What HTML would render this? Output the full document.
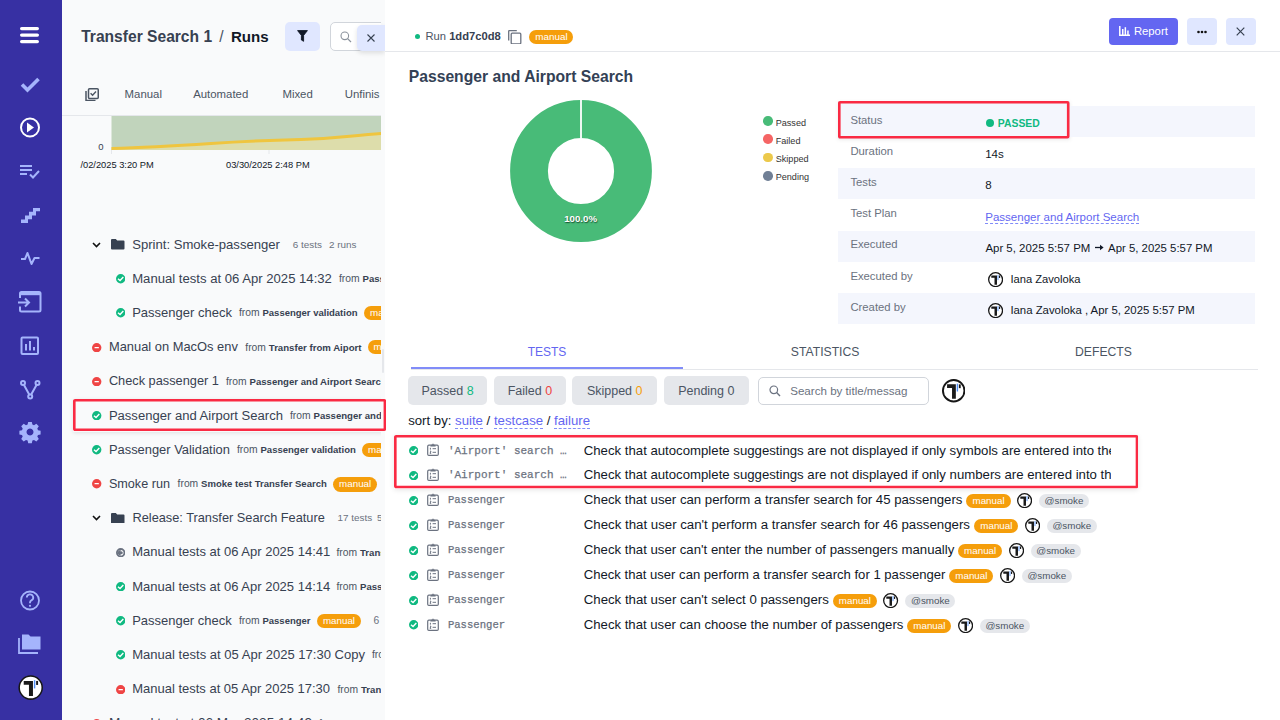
<!DOCTYPE html>
<html><head><meta charset="utf-8">
<style>
*{box-sizing:border-box;margin:0;padding:0}
html,body{width:1280px;height:720px;overflow:hidden;background:#fff;font-family:"Liberation Sans",sans-serif;color:#111827}
.a{position:absolute}
.t{position:absolute;white-space:nowrap}
#sb{position:absolute;left:0;top:0;width:62px;height:720px;background:#3730a3}
#lp{position:absolute;left:62px;top:0;width:323px;height:720px;background:#f9fafb;overflow:hidden}
#lpc{position:absolute;left:0;top:0;width:319px;height:720px;overflow:hidden}
#rp{position:absolute;left:385px;top:0;width:895px;height:720px;background:#fff}
.badge{background:#f59e0b;color:#fff;border-radius:8px;text-align:center;white-space:nowrap}
.from{color:#4b5563}
.from b{color:#374151;font-size:9.6px}
.dash{border-bottom:1px dashed #818cf8}
</style></head><body>
<div id="sb">
<svg class="abs" style="left:0;top:0" width="62" height="720" viewBox="0 0 62 720">
 <g fill="#fff"><rect x="20" y="27" width="19" height="3.2" rx="1.6"/><rect x="20" y="33.5" width="19" height="3.2" rx="1.6"/><rect x="20" y="40" width="19" height="3.2" rx="1.6"/></g>
 <path d="M22 84.5 L27.5 90 L38.5 79" stroke="#a5b4fc" stroke-width="3.6" fill="none" stroke-linecap="butt"/>
 <circle cx="30" cy="127.5" r="9" stroke="#fff" stroke-width="2" fill="none"/><path d="M27 122.5 L34 127.5 L27 132.5Z" fill="#fff"/>
 <g fill="#a5b4fc"><rect x="20" y="165" width="12" height="2"/><rect x="20" y="169" width="12" height="2"/><rect x="20" y="173" width="7" height="2"/></g>
 <path d="M30 174.5 L33 177.5 L39 171" stroke="#a5b4fc" stroke-width="2" fill="none"/>
 <path d="M21 223 H28 V219.3 H32 V215.5 H36 V211.3 H40 V207.9 H33 V211.7 H29 V215.6 H25 V219.5 H21z" fill="#a5b4fc"/>
 <path d="M21 259 h4 l2.5 -6 l4 11 l3 -6 h5" stroke="#a5b4fc" stroke-width="2" fill="none" stroke-linejoin="round"/>
 <path d="M20 298 v-4.5 a1.5 1.5 0 0 1 1.5 -1.5 h17.5 a1.5 1.5 0 0 1 1.5 1.5 v16.5 a1.5 1.5 0 0 1 -1.5 1.5 h-17.5 a1.5 1.5 0 0 1 -1.5 -1.5 v-3.5" stroke="#a5b4fc" stroke-width="2" fill="none"/><rect x="20" y="292" width="20.5" height="3.2" fill="#a5b4fc"/>
 <path d="M18 302.5 h11 M25 298.5 l4 4 l-4 4" stroke="#a5b4fc" stroke-width="2" fill="none"/>
 <rect x="21.5" y="337.5" width="16.5" height="16.5" rx="1" stroke="#a5b4fc" stroke-width="2" fill="none"/>
 <g fill="#a5b4fc"><rect x="25" y="344" width="2" height="6.5"/><rect x="29" y="341" width="2" height="9.5"/><rect x="33" y="347" width="2" height="3.5"/></g>
 <g stroke="#a5b4fc" stroke-width="2" fill="none"><circle cx="23" cy="383" r="2"/><circle cx="37.5" cy="383" r="2"/><circle cx="30.2" cy="396.5" r="2"/><path d="M24 385 L29.2 394.5 M36.5 385 L31.2 394.5"/></g>
 <path fill="#a5b4fc" d="M28.2 422 h3.6 l0.6 2.6 l1.6 0.7 l2.3 -1.5 l2.5 2.5 l-1.5 2.3 l0.7 1.6 l2.6 0.6 v3.6 l-2.6 0.6 l-0.7 1.6 l1.5 2.3 l-2.5 2.5 l-2.3 -1.5 l-1.6 0.7 l-0.6 2.6 h-3.6 l-0.6 -2.6 l-1.6 -0.7 l-2.3 1.5 l-2.5 -2.5 l1.5 -2.3 l-0.7 -1.6 l-2.6 -0.6 v-3.6 l2.6 -0.6 l0.7 -1.6 l-1.5 -2.3 l2.5 -2.5 l2.3 1.5 l1.6 -0.7z M30 428.5 a3.5 3.5 0 1 0 0.01 0z" fill-rule="evenodd"/>
 <circle cx="30" cy="600.5" r="9" stroke="#a5b4fc" stroke-width="1.8" fill="none"/>
 <path d="M26.8 597.5 a3.2 3.2 0 1 1 4.6 2.9 c-1 .5 -1.4 1.1 -1.4 2.1 v.8" stroke="#a5b4fc" stroke-width="1.8" fill="none"/><circle cx="30" cy="605.8" r="1.1" fill="#a5b4fc"/>
 <path d="M22 634.5 h6.5 l2 2 h10 v13 h-18.5z" fill="#a5b4fc"/>
 <path d="M19 638 v15 h19" stroke="#a5b4fc" stroke-width="1.8" fill="none"/>
 <g transform="translate(30.7 687.6) scale(1.025)"><circle cx="0" cy="0" r="11.25" fill="#fff" stroke="#161616" stroke-width="1.5"/><path d="M-6.8 -6.5 H2.2 V8.2 H-1.7 V-2.8 H-6.8z" fill="#1a1a1a"/><rect x="3.1" y="-7.2" width="1.4" height="8" fill="#4f8ff7"/><rect x="5.3" y="-6.5" width="1.9" height="3.9" fill="#1a1a1a"/></g>
</svg>
</div><div id="lp"><div id="lpc"><div class="t " style="left:19.200000000000003px;top:27.00px;font-size:15.6px;line-height:20px;color:#374151;font-weight:bold;">Transfer Search 1<span style="display:inline-block;width:18.9px;text-align:center;font-weight:normal;color:#4b5563">/</span><span style="color:#111827;font-size:15.1px">Runs</span></div>
<div class="a" style="left:222.5px;top:22px;width:35.5px;height:29px;background:#e0e7ff;border-radius:5px"></div><svg class="a" style="left:234.60000000000002px;top:30.4px" width="11" height="12" viewBox="0 0 11 12"><path d="M0.6 0.6 H10.4 L6.6 5.4 V11.3 L4.4 10 V5.4z" fill="#111827" stroke="#111827" stroke-width="0.9" stroke-linejoin="round"/></svg><div class="a" style="left:267.5px;top:22px;width:80px;height:29px;background:#fff;border:1px solid #d1d5db;border-radius:5px"></div><svg class="a" style="left:278px;top:30.5px" width="12" height="12" viewBox="0 0 12 12"><circle cx="4.8" cy="4.8" r="3.8" stroke="#8b929c" stroke-width="1.1" fill="none"/><path d="M7.6 7.6 L11 11" stroke="#8b929c" stroke-width="1.2"/></svg><svg class="a" style="left:22.5px;top:87.5px" width="14" height="13.5" viewBox="0 0 14 13.5"><path d="M1 3 v9.5 h9.5" stroke="#4b5563" stroke-width="1.5" fill="none"/><rect x="3.5" y="0.75" width="9.75" height="9.75" rx="1" stroke="#4b5563" stroke-width="1.5" fill="none"/><path d="M5.6 5.2 L7.6 7.2 L11 3.6" stroke="#4b5563" stroke-width="1.4" fill="none"/></svg><div class="t " style="left:62.599999999999994px;top:83.90px;font-size:11.4px;line-height:20px;color:#4b5563;">Manual</div>
<div class="t " style="left:131.2px;top:83.90px;font-size:11.4px;line-height:20px;color:#4b5563;">Automated</div>
<div class="t " style="left:220.39999999999998px;top:83.90px;font-size:11.4px;line-height:20px;color:#4b5563;">Mixed</div>
<div class="t " style="left:282.7px;top:83.90px;font-size:11.4px;line-height:20px;color:#4b5563;">Unfinis</div>
<div class="a" style="left:0;top:115px;width:323px;height:1px;background:#e5e7eb"></div><svg class="a" style="left:48.5px;top:116px" width="271" height="40" viewBox="0 0 271 40">
<rect x="0.5" y="0" width="270.5" height="34" fill="#c1d4bc"/>
<path d="M0.5 32.5 C 40 31.5, 70 29.5, 100 27.5 S 150 24.5, 190 23.5 S 240 19.5, 271 17.5 V34 H0.5z" fill="#ddddab"/>
<path d="M0.5 32.5 C 40 31.5, 70 29.5, 100 27.5 S 150 24.5, 190 23.5 S 240 19.5, 271 17.5" stroke="#efc53f" stroke-width="3" fill="none"/>
<rect x="0" y="34" width="1" height="4" fill="#e5e7eb"/>
<rect x="157.5" y="34" width="1" height="4" fill="#e5e7eb"/>
</svg><div class="t " style="left:36.2px;top:137.00px;font-size:9.5px;line-height:20px;color:#374151;">0</div>
<div class="t " style="left:18.400000000000006px;top:154.50px;font-size:9.3px;line-height:20px;color:#111827;letter-spacing:0px">/02/2025 3:20 PM</div>
<div class="t " style="left:164px;top:154.50px;font-size:9.3px;line-height:20px;color:#111827;">03/30/2025 2:48 PM</div>
<div class="a" style="left:11px;top:399px;width:313px;height:33px;background:#f9fafb;box-shadow:0 1px 4px rgba(0,0,0,0.10)"></div><svg class="a" style="left:30.200000000000003px;top:241.8px" width="9" height="6" viewBox="0 0 9 6"><path d="M1 1 L4.5 4.5 L8 1" stroke="#111" stroke-width="1.6" fill="none"/></svg><svg class="a" style="left:49.099999999999994px;top:239.2px" width="13.5" height="10.5" viewBox="0 0 13.5 10.5"><path d="M0 1 a1 1 0 0 1 1 -1 h3.8 l1.4 1.4 h6.3 a1 1 0 0 1 1 1 v7.1 a1 1 0 0 1 -1 1 h-11.5 a1 1 0 0 1 -1 -1z" fill="#374151"/></svg><div class="t " style="left:70.19999999999999px;top:234.50px;font-size:13.1px;line-height:20px;color:#374151;">Sprint: Smoke-passenger</div>
<div class="t " style="left:230.8px;top:234.50px;font-size:9.9px;line-height:20px;color:#6b7280;">6 tests</div>
<div class="t " style="left:266.9px;top:234.50px;font-size:9.9px;line-height:20px;color:#6b7280;">2 runs</div>
<svg class="a" style="left:53.60px;top:274.20px" width="9.40" height="9.40" viewBox="0 0 10 10"><circle cx="5" cy="5" r="5" fill="#10b981"/><path d="M2.1 5.1 L4.3 6.9 L7.8 3.2" stroke="#fff" stroke-width="1.5" fill="none"/></svg><div class="t " style="left:70.19999999999999px;top:268.70px;font-size:13.12px;line-height:20px;color:#374151;">Manual tests at 06 Apr 2025 14:32</div>
<div class="t " style="left:277px;top:269.10px;font-size:10.3px;line-height:20px;color:#4b5563;"><span style="color:#4b5563">from</span> <b style="color:#374151;font-size:9.6px">Passenger</b></div>
<svg class="a" style="left:53.60px;top:308.40px" width="9.40" height="9.40" viewBox="0 0 10 10"><circle cx="5" cy="5" r="5" fill="#10b981"/><path d="M2.1 5.1 L4.3 6.9 L7.8 3.2" stroke="#fff" stroke-width="1.5" fill="none"/></svg><div class="t " style="left:70.19999999999999px;top:302.90px;font-size:13.01px;line-height:20px;color:#374151;">Passenger check</div>
<div class="t " style="left:177px;top:303.30px;font-size:10.3px;line-height:20px;color:#4b5563;"><span style="color:#4b5563">from</span> <b style="color:#374151;font-size:9.5px">Passenger validation</b></div>
<svg class="a" style="left:30.30px;top:342.60px" width="9.40" height="9.40" viewBox="0 0 10 10"><circle cx="5" cy="5" r="5" fill="#ef4444"/><rect x="2.6" y="4.3" width="4.8" height="1.4" rx=".5" fill="#fff"/></svg><div class="t " style="left:46.900000000000006px;top:337.10px;font-size:12.9px;line-height:20px;color:#374151;">Manual on MacOs env</div>
<div class="t " style="left:183.3px;top:337.50px;font-size:10.3px;line-height:20px;color:#4b5563;"><span style="color:#4b5563">from</span> <b style="color:#374151;font-size:9.65px">Transfer from Aiport</b></div>
<svg class="a" style="left:30.30px;top:376.80px" width="9.40" height="9.40" viewBox="0 0 10 10"><circle cx="5" cy="5" r="5" fill="#ef4444"/><rect x="2.6" y="4.3" width="4.8" height="1.4" rx=".5" fill="#fff"/></svg><div class="t " style="left:46.900000000000006px;top:371.30px;font-size:12.78px;line-height:20px;color:#374151;">Check passenger 1</div>
<div class="t " style="left:164px;top:371.70px;font-size:10.3px;line-height:20px;color:#4b5563;"><span style="color:#4b5563">from</span> <b style="color:#374151;font-size:9.6px">Passenger and Airport Search</b></div>
<svg class="a" style="left:30.30px;top:411.00px" width="9.40" height="9.40" viewBox="0 0 10 10"><circle cx="5" cy="5" r="5" fill="#10b981"/><path d="M2.1 5.1 L4.3 6.9 L7.8 3.2" stroke="#fff" stroke-width="1.5" fill="none"/></svg><div class="t " style="left:46.900000000000006px;top:405.50px;font-size:13.05px;line-height:20px;color:#374151;">Passenger and Airport Search</div>
<div class="t " style="left:228px;top:405.90px;font-size:10.3px;line-height:20px;color:#4b5563;"><span style="color:#4b5563">from</span> <b style="color:#374151;font-size:9.6px">Passenger and Airport Search</b></div>
<svg class="a" style="left:30.30px;top:445.20px" width="9.40" height="9.40" viewBox="0 0 10 10"><circle cx="5" cy="5" r="5" fill="#10b981"/><path d="M2.1 5.1 L4.3 6.9 L7.8 3.2" stroke="#fff" stroke-width="1.5" fill="none"/></svg><div class="t " style="left:46.900000000000006px;top:439.70px;font-size:12.92px;line-height:20px;color:#374151;">Passenger Validation</div>
<div class="t " style="left:175px;top:440.10px;font-size:10.3px;line-height:20px;color:#4b5563;"><span style="color:#4b5563">from</span> <b style="color:#374151;font-size:9.54px">Passenger validation</b></div>
<svg class="a" style="left:30.30px;top:479.40px" width="9.40" height="9.40" viewBox="0 0 10 10"><circle cx="5" cy="5" r="5" fill="#ef4444"/><rect x="2.6" y="4.3" width="4.8" height="1.4" rx=".5" fill="#fff"/></svg><div class="t " style="left:46.900000000000006px;top:473.90px;font-size:12.64px;line-height:20px;color:#374151;">Smoke run</div>
<div class="t " style="left:115.6px;top:474.30px;font-size:10.3px;line-height:20px;color:#4b5563;"><span style="color:#4b5563">from</span> <b style="color:#374151;font-size:9.56px">Smoke test Transfer Search</b></div>
<svg class="a" style="left:30.200000000000003px;top:515.4px" width="9" height="6" viewBox="0 0 9 6"><path d="M1 1 L4.5 4.5 L8 1" stroke="#111" stroke-width="1.6" fill="none"/></svg><svg class="a" style="left:49.099999999999994px;top:512.8000000000001px" width="13.5" height="10.5" viewBox="0 0 13.5 10.5"><path d="M0 1 a1 1 0 0 1 1 -1 h3.8 l1.4 1.4 h6.3 a1 1 0 0 1 1 1 v7.1 a1 1 0 0 1 -1 1 h-11.5 a1 1 0 0 1 -1 -1z" fill="#374151"/></svg><div class="t " style="left:70.5px;top:508.10px;font-size:12.77px;line-height:20px;color:#374151;">Release: Transfer Search Feature</div>
<div class="t " style="left:275.6px;top:508.10px;font-size:9.9px;line-height:20px;color:#6b7280;">17 tests</div>
<div class="t " style="left:315px;top:508.10px;font-size:9.9px;line-height:20px;color:#6b7280;">5 runs</div>
<svg class="a" style="left:53.60px;top:547.80px" width="9.40" height="9.40" viewBox="0 0 10 10"><circle cx="5" cy="5" r="5" fill="#6b7280"/><circle cx="5" cy="5" r="3" fill="#fff"/><path d="M5 2 A3 3 0 0 0 5 8z" fill="#6b7280"/><circle cx="5.6" cy="5" r="1.6" fill="#6b7280"/></svg><div class="t " style="left:70.19999999999999px;top:542.30px;font-size:13.01px;line-height:20px;color:#374151;">Manual tests at 06 Apr 2025 14:41</div>
<div class="t " style="left:274.5px;top:542.70px;font-size:10.3px;line-height:20px;color:#4b5563;"><span style="color:#4b5563">from</span> <b style="color:#374151;font-size:9.6px">Transfer Search</b></div>
<svg class="a" style="left:53.60px;top:582.00px" width="9.40" height="9.40" viewBox="0 0 10 10"><circle cx="5" cy="5" r="5" fill="#10b981"/><path d="M2.1 5.1 L4.3 6.9 L7.8 3.2" stroke="#fff" stroke-width="1.5" fill="none"/></svg><div class="t " style="left:70.19999999999999px;top:576.50px;font-size:13.01px;line-height:20px;color:#374151;">Manual tests at 06 Apr 2025 14:14</div>
<div class="t " style="left:274.5px;top:576.90px;font-size:10.3px;line-height:20px;color:#4b5563;"><span style="color:#4b5563">from</span> <b style="color:#374151;font-size:9.6px">Passenger</b></div>
<svg class="a" style="left:53.60px;top:616.20px" width="9.40" height="9.40" viewBox="0 0 10 10"><circle cx="5" cy="5" r="5" fill="#10b981"/><path d="M2.1 5.1 L4.3 6.9 L7.8 3.2" stroke="#fff" stroke-width="1.5" fill="none"/></svg><div class="t " style="left:70.19999999999999px;top:610.70px;font-size:12.97px;line-height:20px;color:#374151;">Passenger check</div>
<div class="t " style="left:177px;top:611.10px;font-size:10.3px;line-height:20px;color:#4b5563;"><span style="color:#4b5563">from</span> <b style="color:#374151;font-size:9.49px">Passenger</b></div>
<svg class="a" style="left:53.60px;top:650.40px" width="9.40" height="9.40" viewBox="0 0 10 10"><circle cx="5" cy="5" r="5" fill="#10b981"/><path d="M2.1 5.1 L4.3 6.9 L7.8 3.2" stroke="#fff" stroke-width="1.5" fill="none"/></svg><div class="t " style="left:70.19999999999999px;top:644.90px;font-size:13.05px;line-height:20px;color:#374151;">Manual tests at 05 Apr 2025 17:30 Copy</div>
<div class="t " style="left:310px;top:645.30px;font-size:10.3px;line-height:20px;color:#4b5563;"><span style="color:#4b5563">from</span> <b style="color:#374151;font-size:9.6px">Passenger</b></div>
<svg class="a" style="left:53.60px;top:684.60px" width="9.40" height="9.40" viewBox="0 0 10 10"><circle cx="5" cy="5" r="5" fill="#ef4444"/><rect x="2.6" y="4.3" width="4.8" height="1.4" rx=".5" fill="#fff"/></svg><div class="t " style="left:70.19999999999999px;top:679.10px;font-size:12.99px;line-height:20px;color:#374151;">Manual tests at 05 Apr 2025 17:30</div>
<div class="t " style="left:275.5px;top:679.50px;font-size:10.3px;line-height:20px;color:#4b5563;"><span style="color:#4b5563">from</span> <b style="color:#374151;font-size:9.6px">Transfer Search</b></div>
<svg class="a" style="left:30.30px;top:718.80px" width="9.40" height="9.40" viewBox="0 0 10 10"><circle cx="5" cy="5" r="5" fill="#ef4444"/><rect x="2.6" y="4.3" width="4.8" height="1.4" rx=".5" fill="#fff"/></svg><div class="t " style="left:46.900000000000006px;top:713.30px;font-size:13.58px;line-height:20px;color:#374151;">Manual test at 06 Mar 2025 14:49</div>
<div class="t " style="left:257px;top:713.70px;font-size:10.3px;line-height:20px;color:#4b5563;"><span style="color:#4b5563">from</span> <b style="color:#374151;font-size:9.6px">Transfer Search</b></div>
<div class="a badge" style="left:302px;top:306.00px;width:44.3px;height:14.2px;line-height:14.2px;font-size:9.8px">manual</div><div class="a badge" style="left:305.5px;top:340.30px;width:44.3px;height:14.2px;line-height:14.2px;font-size:9.8px">manual</div><div class="a badge" style="left:300px;top:443.20px;width:44.3px;height:14.2px;line-height:14.2px;font-size:9.8px">manual</div><div class="a badge" style="left:271px;top:477.40px;width:44.3px;height:14.2px;line-height:14.2px;font-size:9.8px">manual</div><div class="a badge" style="left:254.8px;top:613.90px;width:44.3px;height:14.2px;line-height:14.2px;font-size:9.8px">manual</div><div class="t " style="left:311.6px;top:610.70px;font-size:10.3px;line-height:20px;color:#6b7280;">6</div>
</div><div class="a" style="left:295.2px;top:24.5px;width:28px;height:26px;background:#e0e7ff;border-radius:5px 0 0 5px;box-shadow:0 2px 5px rgba(0,0,0,0.12)"></div><svg class="a" style="left:304px;top:33px" width="10" height="10" viewBox="0 0 10 10"><path d="M1.5 1.5 L8.5 8.5 M8.5 1.5 L1.5 8.5" stroke="#374151" stroke-width="1.1"/></svg></div><div class="a" style="left:382.2px;top:349.4px;width:2.2px;height:23.6px;background:#e5e7eb;border-radius:2px"></div><div id="rp"><div class="a" style="left:0;top:51px;width:895px;height:1px;background:#e5e7eb"></div><div class="a" style="left:29.5px;top:33.9px;width:5.4px;height:5.4px;border-radius:50%;background:#10b981"></div><div class="t " style="left:40.5px;top:25.80px;font-size:11.2px;line-height:20px;color:#4b5563;">Run <b style="color:#374151">1dd7c0d8</b></div>
<svg class="a" style="left:123.30000000000001px;top:29.5px" width="13.5" height="14.5" viewBox="0 0 13.5 14.5"><path d="M0.7 10.5 V1.2 a.5 .5 0 0 1 .5 -.5 H8.8" stroke="#6b7280" stroke-width="1.3" fill="none"/><rect x="3.2" y="3.2" width="9.6" height="10.6" rx="1" stroke="#6b7280" stroke-width="1.3" fill="none"/></svg><div class="a badge" style="left:144.39999999999998px;top:29.55px;width:44px;height:14.1px;line-height:14.1px;font-size:9.9px">manual</div><div class="a" style="left:724.3px;top:18px;width:68.7px;height:26.5px;background:#6366f1;border-radius:4px"></div><svg class="a" style="left:733.5999999999999px;top:26px" width="11" height="10" viewBox="0 0 11 10"><path d="M0.8 0 V9.2 H11" stroke="#fff" stroke-width="1.5" fill="none"/><rect x="3" y="3" width="1.5" height="6" fill="#fff"/><rect x="5.6" y="1.2" width="1.5" height="7.8" fill="#fff"/><rect x="8.2" y="4.5" width="1.5" height="4.5" fill="#fff"/></svg><div class="t " style="left:748.9000000000001px;top:21.20px;font-size:11.3px;line-height:20px;color:#fff;">Report</div>
<div class="a" style="left:802.3px;top:18px;width:29.3px;height:26.5px;background:#e0e7ff;border-radius:4px"></div><svg class="a" style="left:812px;top:29.5px" width="10" height="4" viewBox="0 0 10 4"><circle cx="1.5" cy="2" r="1.3" fill="#111"/><circle cx="5" cy="2" r="1.3" fill="#111"/><circle cx="8.5" cy="2" r="1.3" fill="#111"/></svg><div class="a" style="left:841.2px;top:18px;width:29.4px;height:26.5px;background:#e0e7ff;border-radius:4px"></div><svg class="a" style="left:851.4000000000001px;top:26.7px" width="9" height="9" viewBox="0 0 9 9"><path d="M.7 .7 L8.3 8.3 M8.3 .7 L.7 8.3" stroke="#374151" stroke-width="1.2"/></svg><div class="t " style="left:23.75px;top:66.60px;font-size:15.7px;line-height:20px;color:#334155;font-weight:bold;">Passenger and Airport Search</div>
<svg class="a" style="left:123.5px;top:99.1px" width="144" height="144" viewBox="0 0 144 144">
<circle cx="72" cy="72" r="52" stroke="#48bb78" stroke-width="37.8" fill="none"/>
<rect x="71.1" y="0" width="1.8" height="39" fill="#fff"/>
</svg><div class="t " style="left:179.20000000000005px;top:209.30px;font-size:9.7px;line-height:20px;color:#fff;font-weight:bold;text-shadow:0.6px 0.8px 1.2px rgba(0,40,20,0.75)">100.0%</div>
<div class="a" style="left:378.20000000000005px;top:116.20px;width:9.6px;height:9.6px;border-radius:50%;background:#48bb78"></div><div class="t " style="left:390.70000000000005px;top:112.50px;font-size:9.1px;line-height:20px;color:#333;">Passed</div>
<div class="a" style="left:378.20000000000005px;top:134.45px;width:9.6px;height:9.6px;border-radius:50%;background:#f56565"></div><div class="t " style="left:390.70000000000005px;top:130.75px;font-size:9.1px;line-height:20px;color:#333;">Failed</div>
<div class="a" style="left:378.20000000000005px;top:152.70px;width:9.6px;height:9.6px;border-radius:50%;background:#ecc94b"></div><div class="t " style="left:390.70000000000005px;top:149.00px;font-size:9.1px;line-height:20px;color:#333;">Skipped</div>
<div class="a" style="left:378.20000000000005px;top:170.95px;width:9.6px;height:9.6px;border-radius:50%;background:#718096"></div><div class="t " style="left:390.70000000000005px;top:167.25px;font-size:9.1px;line-height:20px;color:#333;">Pending</div>
<div class="a" style="left:453px;top:101.4px;width:231.5px;height:37.5px;background:#f4f6fd;box-shadow:0 1px 4px rgba(0,0,0,0.08), inset 0 0 4px rgba(0,0,0,0.07)"></div><div class="a" style="left:684.5px;top:105.50px;width:185.5px;height:31.25px;background:#f4f6fd"></div><div class="t " style="left:465.4px;top:110.00px;font-size:11.3px;line-height:20px;color:#6b7280;">Status</div>
<div class="a" style="left:600.9px;top:119.20px;width:8px;height:8px;border-radius:50%;background:#10b981"></div><div class="t " style="left:612.8px;top:114.20px;font-size:10.4px;line-height:20px;color:#10b981;font-weight:bold;">PASSED</div>
<div class="t " style="left:465.4px;top:141.10px;font-size:11.3px;line-height:20px;color:#6b7280;">Duration</div>
<div class="t " style="left:600.2px;top:144.30px;font-size:11.55px;line-height:20px;color:#111827;">14s</div>
<div class="a" style="left:453px;top:168.00px;width:417px;height:31.25px;background:#f4f6fd"></div><div class="t " style="left:465.4px;top:172.20px;font-size:11.3px;line-height:20px;color:#6b7280;">Tests</div>
<div class="t " style="left:600.2px;top:175.40px;font-size:11.55px;line-height:20px;color:#111827;">8</div>
<div class="t " style="left:465.4px;top:203.30px;font-size:11.3px;line-height:20px;color:#6b7280;">Test Plan</div>
<div class="t " style="left:600.2px;top:208.50px;font-size:11.55px;line-height:16px;color:#6366f1;"><span class="dash" style="color:#6366f1">Passenger and Airport Search</span></div>
<div class="a" style="left:453px;top:230.50px;width:417px;height:31.25px;background:#f4f6fd"></div><div class="t " style="left:465.4px;top:234.40px;font-size:11.3px;line-height:20px;color:#6b7280;">Executed</div>
<div class="t " style="left:600.4px;top:237.60px;font-size:11.44px;line-height:20px;color:#111827;">Apr 5, 2025 5:57 PM</div>
<svg class="a" style="left:709.5999999999999px;top:244.10px" width="9" height="7" viewBox="0 0 9 7"><path d="M0 3.5 H7" stroke="#111827" stroke-width="1.3"/><path d="M5 0.8 L8.6 3.5 L5 6.2z" fill="#111827"/></svg><div class="t " style="left:723.0999999999999px;top:237.60px;font-size:11.38px;line-height:20px;color:#111827;">Apr 5, 2025 5:57 PM</div>
<div class="t " style="left:465.4px;top:265.50px;font-size:11.3px;line-height:20px;color:#6b7280;">Executed by</div>
<svg class="a" style="left:603.20px;top:271.80px" width="15.20" height="15.20" viewBox="-12 -12 24 24"><circle cx="0" cy="0" r="10.97" fill="#fff" stroke="#161616" stroke-width="2.05"/><path d="M-6.8 -6.5 H2.2 V8.2 H-1.7 V-2.8 H-6.8z" fill="#1a1a1a"/><rect x="3.1" y="-7.2" width="1.4" height="8" fill="#4f8ff7"/><rect x="5.3" y="-6.5" width="1.9" height="3.9" fill="#1a1a1a"/></svg><div class="t " style="left:625.4px;top:268.70px;font-size:11.18px;line-height:20px;color:#111827;">Iana Zavoloka</div>
<div class="a" style="left:453px;top:293.00px;width:417px;height:31.25px;background:#f4f6fd"></div><div class="t " style="left:465.4px;top:296.60px;font-size:11.3px;line-height:20px;color:#6b7280;">Created by</div>
<svg class="a" style="left:603.20px;top:302.90px" width="15.20" height="15.20" viewBox="-12 -12 24 24"><circle cx="0" cy="0" r="10.97" fill="#fff" stroke="#161616" stroke-width="2.05"/><path d="M-6.8 -6.5 H2.2 V8.2 H-1.7 V-2.8 H-6.8z" fill="#1a1a1a"/><rect x="3.1" y="-7.2" width="1.4" height="8" fill="#4f8ff7"/><rect x="5.3" y="-6.5" width="1.9" height="3.9" fill="#1a1a1a"/></svg><div class="t " style="left:625.4px;top:299.80px;font-size:11.37px;line-height:20px;color:#111827;">Iana Zavoloka , Apr 5, 2025 5:57 PM</div>
<div class="a" style="left:26px;top:369px;width:847px;height:1px;background:#e5e7eb"></div><div class="a" style="left:26px;top:366.8px;width:272px;height:2px;background:#818cf8"></div><div class="t " style="left:142.70000000000005px;top:341.50px;font-size:12.0px;line-height:20px;color:#6366f1;">TESTS</div>
<div class="t " style="left:405.79999999999995px;top:341.50px;font-size:12.2px;line-height:20px;color:#4b5563;">STATISTICS</div>
<div class="t " style="left:690px;top:341.50px;font-size:12.2px;line-height:20px;color:#4b5563;">DEFECTS</div>
<div class="a" style="left:22.69999999999999px;top:376.2px;width:79.7px;height:29.3px;background:#e5e7eb;border-radius:5px;text-align:center;line-height:31px;font-size:12.5px;color:#4b5563;white-space:nowrap">Passed <span style="color:#10b981">8</span></div><div class="a" style="left:109.19999999999999px;top:376.2px;width:71.5px;height:29.3px;background:#e5e7eb;border-radius:5px;text-align:center;line-height:31px;font-size:12.5px;color:#4b5563;white-space:nowrap">Failed <span style="color:#ef4444">0</span></div><div class="a" style="left:187.29999999999995px;top:376.2px;width:84.8px;height:29.3px;background:#e5e7eb;border-radius:5px;text-align:center;line-height:31px;font-size:12.5px;color:#4b5563;white-space:nowrap">Skipped <span style="color:#f59e0b">0</span></div><div class="a" style="left:278.79999999999995px;top:376.2px;width:85px;height:29.3px;background:#e5e7eb;border-radius:5px;text-align:center;line-height:31px;font-size:12.5px;color:#4b5563;white-space:nowrap">Pending <span style="color:#4b5563">0</span></div><div class="a" style="left:373.4px;top:376.5px;width:170.5px;height:28.7px;border:1px solid #d1d5db;border-radius:5px;background:#fff"></div><svg class="a" style="left:384px;top:385px" width="12" height="12" viewBox="0 0 12 12"><circle cx="4.8" cy="4.8" r="3.8" stroke="#6b7280" stroke-width="1.2" fill="none"/><path d="M7.6 7.6 L11 11" stroke="#6b7280" stroke-width="1.4"/></svg><div class="t " style="left:405.20000000000005px;top:380.50px;font-size:11.6px;line-height:20px;color:#6b7280;">Search by title/messag</div>
<svg class="a" style="left:557.10px;top:379.30px" width="23.40" height="23.40" viewBox="-12 -12 24 24"><circle cx="0" cy="0" r="11.03" fill="#fff" stroke="#161616" stroke-width="1.95"/><path d="M-6.8 -6.5 H2.2 V8.2 H-1.7 V-2.8 H-6.8z" fill="#1a1a1a"/><rect x="3.1" y="-7.2" width="1.4" height="8" fill="#4f8ff7"/><rect x="5.3" y="-6.5" width="1.9" height="3.9" fill="#1a1a1a"/></svg><div class="t " style="left:23.19999999999999px;top:412.00px;font-size:13.2px;line-height:17px;color:#111827;">sort by: <span class="dash" style="color:#6366f1">suite</span> / <span class="dash" style="color:#6366f1">testcase</span> / <span class="dash" style="color:#6366f1">failure</span></div>
<div class="a" style="left:8.5px;top:435.3px;width:744.3px;height:53.3px;background:#fff;box-shadow:0 1px 5px rgba(0,0,0,0.10)"></div><svg class="a" style="left:23.60px;top:445.80px" width="9.40" height="9.40" viewBox="0 0 10 10"><circle cx="5" cy="5" r="5" fill="#10b981"/><path d="M2.1 5.1 L4.3 6.9 L7.8 3.2" stroke="#fff" stroke-width="1.5" fill="none"/></svg><svg class="a" style="left:41.80000000000001px;top:443.10px" width="12" height="13" viewBox="0 0 12 13"><rect x=".7" y="2.2" width="10.6" height="10.2" rx="1.2" stroke="#6b7280" stroke-width="1.2" fill="none"/><path d="M3.3 3.4 L3.9 1.7 H5.1 L6 .3 L6.9 1.7 H8.1 L8.7 3.4z" fill="#6b7280"/><path d="M3.4 4.8 V6.6 M3 8.2 H4 L3 10.3 H4.2 M5.6 5.7 H9 M5.6 9.3 H9" stroke="#6b7280" stroke-width="1" fill="none"/></svg><div class="t " style="left:62.89999999999998px;top:440.50px;font-size:11.0px;line-height:20px;color:#6b7280;font-family:'Liberation Mono',monospace;-webkit-text-stroke:0.25px #6b7280">'Airport' search …</div>
<div class="t" style="left:198.75px;top:440.50px;width:527.15px;overflow:hidden;font-size:13.2px;line-height:20px;color:#111827">Check that autocomplete suggestings are not displayed if only symbols are entered into the field</div><svg class="a" style="left:23.60px;top:470.75px" width="9.40" height="9.40" viewBox="0 0 10 10"><circle cx="5" cy="5" r="5" fill="#10b981"/><path d="M2.1 5.1 L4.3 6.9 L7.8 3.2" stroke="#fff" stroke-width="1.5" fill="none"/></svg><svg class="a" style="left:41.80000000000001px;top:468.05px" width="12" height="13" viewBox="0 0 12 13"><rect x=".7" y="2.2" width="10.6" height="10.2" rx="1.2" stroke="#6b7280" stroke-width="1.2" fill="none"/><path d="M3.3 3.4 L3.9 1.7 H5.1 L6 .3 L6.9 1.7 H8.1 L8.7 3.4z" fill="#6b7280"/><path d="M3.4 4.8 V6.6 M3 8.2 H4 L3 10.3 H4.2 M5.6 5.7 H9 M5.6 9.3 H9" stroke="#6b7280" stroke-width="1" fill="none"/></svg><div class="t " style="left:62.89999999999998px;top:465.45px;font-size:11.0px;line-height:20px;color:#6b7280;font-family:'Liberation Mono',monospace;-webkit-text-stroke:0.25px #6b7280">'Airport' search …</div>
<div class="t" style="left:198.75px;top:465.45px;width:527.15px;overflow:hidden;font-size:13.2px;line-height:20px;color:#111827">Check that autocomplete suggestings are not displayed if only numbers are entered into the field</div><svg class="a" style="left:23.60px;top:495.70px" width="9.40" height="9.40" viewBox="0 0 10 10"><circle cx="5" cy="5" r="5" fill="#10b981"/><path d="M2.1 5.1 L4.3 6.9 L7.8 3.2" stroke="#fff" stroke-width="1.5" fill="none"/></svg><svg class="a" style="left:41.80000000000001px;top:493.00px" width="12" height="13" viewBox="0 0 12 13"><rect x=".7" y="2.2" width="10.6" height="10.2" rx="1.2" stroke="#6b7280" stroke-width="1.2" fill="none"/><path d="M3.3 3.4 L3.9 1.7 H5.1 L6 .3 L6.9 1.7 H8.1 L8.7 3.4z" fill="#6b7280"/><path d="M3.4 4.8 V6.6 M3 8.2 H4 L3 10.3 H4.2 M5.6 5.7 H9 M5.6 9.3 H9" stroke="#6b7280" stroke-width="1" fill="none"/></svg><div class="t " style="left:62.89999999999998px;top:490.40px;font-size:10.6px;line-height:20px;color:#6b7280;font-family:'Liberation Mono',monospace;-webkit-text-stroke:0.25px #6b7280">Passenger</div>
<div class="t " style="left:198.75px;top:490.40px;font-size:13.21px;line-height:20px;color:#111827;">Check that user can perform a transfer search for 45 passengers</div>
<div class="a badge" style="left:581.4px;top:493.95px;width:44.3px;height:14.3px;line-height:14.3px;font-size:9.8px">manual</div><svg class="a" style="left:632.00px;top:493.00px" width="15.20" height="15.20" viewBox="-12 -12 24 24"><circle cx="0" cy="0" r="10.97" fill="#fff" stroke="#161616" stroke-width="2.05"/><path d="M-6.8 -6.5 H2.2 V8.2 H-1.7 V-2.8 H-6.8z" fill="#1a1a1a"/><rect x="3.1" y="-7.2" width="1.4" height="8" fill="#4f8ff7"/><rect x="5.3" y="-6.5" width="1.9" height="3.9" fill="#1a1a1a"/></svg><div class="a" style="left:654.00px;top:494.10px;width:50px;height:14px;border-radius:7px;background:#e5e7eb;color:#4b5563;font-size:9.8px;line-height:14px;text-align:center">@smoke</div><svg class="a" style="left:23.60px;top:520.65px" width="9.40" height="9.40" viewBox="0 0 10 10"><circle cx="5" cy="5" r="5" fill="#10b981"/><path d="M2.1 5.1 L4.3 6.9 L7.8 3.2" stroke="#fff" stroke-width="1.5" fill="none"/></svg><svg class="a" style="left:41.80000000000001px;top:517.95px" width="12" height="13" viewBox="0 0 12 13"><rect x=".7" y="2.2" width="10.6" height="10.2" rx="1.2" stroke="#6b7280" stroke-width="1.2" fill="none"/><path d="M3.3 3.4 L3.9 1.7 H5.1 L6 .3 L6.9 1.7 H8.1 L8.7 3.4z" fill="#6b7280"/><path d="M3.4 4.8 V6.6 M3 8.2 H4 L3 10.3 H4.2 M5.6 5.7 H9 M5.6 9.3 H9" stroke="#6b7280" stroke-width="1" fill="none"/></svg><div class="t " style="left:62.89999999999998px;top:515.35px;font-size:10.6px;line-height:20px;color:#6b7280;font-family:'Liberation Mono',monospace;-webkit-text-stroke:0.25px #6b7280">Passenger</div>
<div class="t " style="left:198.75px;top:515.35px;font-size:13.26px;line-height:20px;color:#111827;">Check that user can't perform a transfer search for 46 passengers</div>
<div class="a badge" style="left:589.2px;top:518.90px;width:44.3px;height:14.3px;line-height:14.3px;font-size:9.8px">manual</div><svg class="a" style="left:639.80px;top:517.95px" width="15.20" height="15.20" viewBox="-12 -12 24 24"><circle cx="0" cy="0" r="10.97" fill="#fff" stroke="#161616" stroke-width="2.05"/><path d="M-6.8 -6.5 H2.2 V8.2 H-1.7 V-2.8 H-6.8z" fill="#1a1a1a"/><rect x="3.1" y="-7.2" width="1.4" height="8" fill="#4f8ff7"/><rect x="5.3" y="-6.5" width="1.9" height="3.9" fill="#1a1a1a"/></svg><div class="a" style="left:661.80px;top:519.05px;width:50px;height:14px;border-radius:7px;background:#e5e7eb;color:#4b5563;font-size:9.8px;line-height:14px;text-align:center">@smoke</div><svg class="a" style="left:23.60px;top:545.60px" width="9.40" height="9.40" viewBox="0 0 10 10"><circle cx="5" cy="5" r="5" fill="#10b981"/><path d="M2.1 5.1 L4.3 6.9 L7.8 3.2" stroke="#fff" stroke-width="1.5" fill="none"/></svg><svg class="a" style="left:41.80000000000001px;top:542.90px" width="12" height="13" viewBox="0 0 12 13"><rect x=".7" y="2.2" width="10.6" height="10.2" rx="1.2" stroke="#6b7280" stroke-width="1.2" fill="none"/><path d="M3.3 3.4 L3.9 1.7 H5.1 L6 .3 L6.9 1.7 H8.1 L8.7 3.4z" fill="#6b7280"/><path d="M3.4 4.8 V6.6 M3 8.2 H4 L3 10.3 H4.2 M5.6 5.7 H9 M5.6 9.3 H9" stroke="#6b7280" stroke-width="1" fill="none"/></svg><div class="t " style="left:62.89999999999998px;top:540.30px;font-size:10.6px;line-height:20px;color:#6b7280;font-family:'Liberation Mono',monospace;-webkit-text-stroke:0.25px #6b7280">Passenger</div>
<div class="t " style="left:198.75px;top:540.30px;font-size:13.19px;line-height:20px;color:#111827;">Check that user can't enter the number of passengers manually</div>
<div class="a badge" style="left:573px;top:543.85px;width:44.3px;height:14.3px;line-height:14.3px;font-size:9.8px">manual</div><svg class="a" style="left:623.60px;top:542.90px" width="15.20" height="15.20" viewBox="-12 -12 24 24"><circle cx="0" cy="0" r="10.97" fill="#fff" stroke="#161616" stroke-width="2.05"/><path d="M-6.8 -6.5 H2.2 V8.2 H-1.7 V-2.8 H-6.8z" fill="#1a1a1a"/><rect x="3.1" y="-7.2" width="1.4" height="8" fill="#4f8ff7"/><rect x="5.3" y="-6.5" width="1.9" height="3.9" fill="#1a1a1a"/></svg><div class="a" style="left:645.60px;top:544.00px;width:50px;height:14px;border-radius:7px;background:#e5e7eb;color:#4b5563;font-size:9.8px;line-height:14px;text-align:center">@smoke</div><svg class="a" style="left:23.60px;top:570.55px" width="9.40" height="9.40" viewBox="0 0 10 10"><circle cx="5" cy="5" r="5" fill="#10b981"/><path d="M2.1 5.1 L4.3 6.9 L7.8 3.2" stroke="#fff" stroke-width="1.5" fill="none"/></svg><svg class="a" style="left:41.80000000000001px;top:567.85px" width="12" height="13" viewBox="0 0 12 13"><rect x=".7" y="2.2" width="10.6" height="10.2" rx="1.2" stroke="#6b7280" stroke-width="1.2" fill="none"/><path d="M3.3 3.4 L3.9 1.7 H5.1 L6 .3 L6.9 1.7 H8.1 L8.7 3.4z" fill="#6b7280"/><path d="M3.4 4.8 V6.6 M3 8.2 H4 L3 10.3 H4.2 M5.6 5.7 H9 M5.6 9.3 H9" stroke="#6b7280" stroke-width="1" fill="none"/></svg><div class="t " style="left:62.89999999999998px;top:565.25px;font-size:10.6px;line-height:20px;color:#6b7280;font-family:'Liberation Mono',monospace;-webkit-text-stroke:0.25px #6b7280">Passenger</div>
<div class="t " style="left:198.75px;top:565.25px;font-size:13.1px;line-height:20px;color:#111827;">Check that user can perform a transfer search for 1 passenger</div>
<div class="a badge" style="left:564.2px;top:568.80px;width:44.3px;height:14.3px;line-height:14.3px;font-size:9.8px">manual</div><svg class="a" style="left:614.80px;top:567.85px" width="15.20" height="15.20" viewBox="-12 -12 24 24"><circle cx="0" cy="0" r="10.97" fill="#fff" stroke="#161616" stroke-width="2.05"/><path d="M-6.8 -6.5 H2.2 V8.2 H-1.7 V-2.8 H-6.8z" fill="#1a1a1a"/><rect x="3.1" y="-7.2" width="1.4" height="8" fill="#4f8ff7"/><rect x="5.3" y="-6.5" width="1.9" height="3.9" fill="#1a1a1a"/></svg><div class="a" style="left:636.80px;top:568.95px;width:50px;height:14px;border-radius:7px;background:#e5e7eb;color:#4b5563;font-size:9.8px;line-height:14px;text-align:center">@smoke</div><svg class="a" style="left:23.60px;top:595.50px" width="9.40" height="9.40" viewBox="0 0 10 10"><circle cx="5" cy="5" r="5" fill="#10b981"/><path d="M2.1 5.1 L4.3 6.9 L7.8 3.2" stroke="#fff" stroke-width="1.5" fill="none"/></svg><svg class="a" style="left:41.80000000000001px;top:592.80px" width="12" height="13" viewBox="0 0 12 13"><rect x=".7" y="2.2" width="10.6" height="10.2" rx="1.2" stroke="#6b7280" stroke-width="1.2" fill="none"/><path d="M3.3 3.4 L3.9 1.7 H5.1 L6 .3 L6.9 1.7 H8.1 L8.7 3.4z" fill="#6b7280"/><path d="M3.4 4.8 V6.6 M3 8.2 H4 L3 10.3 H4.2 M5.6 5.7 H9 M5.6 9.3 H9" stroke="#6b7280" stroke-width="1" fill="none"/></svg><div class="t " style="left:62.89999999999998px;top:590.20px;font-size:10.6px;line-height:20px;color:#6b7280;font-family:'Liberation Mono',monospace;-webkit-text-stroke:0.25px #6b7280">Passenger</div>
<div class="t " style="left:198.75px;top:590.20px;font-size:13.23px;line-height:20px;color:#111827;">Check that user can't select 0 passengers</div>
<div class="a badge" style="left:447.75px;top:593.75px;width:44.3px;height:14.3px;line-height:14.3px;font-size:9.8px">manual</div><svg class="a" style="left:498.35px;top:592.80px" width="15.20" height="15.20" viewBox="-12 -12 24 24"><circle cx="0" cy="0" r="10.97" fill="#fff" stroke="#161616" stroke-width="2.05"/><path d="M-6.8 -6.5 H2.2 V8.2 H-1.7 V-2.8 H-6.8z" fill="#1a1a1a"/><rect x="3.1" y="-7.2" width="1.4" height="8" fill="#4f8ff7"/><rect x="5.3" y="-6.5" width="1.9" height="3.9" fill="#1a1a1a"/></svg><div class="a" style="left:520.35px;top:593.90px;width:50px;height:14px;border-radius:7px;background:#e5e7eb;color:#4b5563;font-size:9.8px;line-height:14px;text-align:center">@smoke</div><svg class="a" style="left:23.60px;top:620.45px" width="9.40" height="9.40" viewBox="0 0 10 10"><circle cx="5" cy="5" r="5" fill="#10b981"/><path d="M2.1 5.1 L4.3 6.9 L7.8 3.2" stroke="#fff" stroke-width="1.5" fill="none"/></svg><svg class="a" style="left:41.80000000000001px;top:617.75px" width="12" height="13" viewBox="0 0 12 13"><rect x=".7" y="2.2" width="10.6" height="10.2" rx="1.2" stroke="#6b7280" stroke-width="1.2" fill="none"/><path d="M3.3 3.4 L3.9 1.7 H5.1 L6 .3 L6.9 1.7 H8.1 L8.7 3.4z" fill="#6b7280"/><path d="M3.4 4.8 V6.6 M3 8.2 H4 L3 10.3 H4.2 M5.6 5.7 H9 M5.6 9.3 H9" stroke="#6b7280" stroke-width="1" fill="none"/></svg><div class="t " style="left:62.89999999999998px;top:615.15px;font-size:10.6px;line-height:20px;color:#6b7280;font-family:'Liberation Mono',monospace;-webkit-text-stroke:0.25px #6b7280">Passenger</div>
<div class="t " style="left:198.75px;top:615.15px;font-size:13.16px;line-height:20px;color:#111827;">Check that user can choose the number of passengers</div>
<div class="a badge" style="left:522.2px;top:618.70px;width:44.3px;height:14.3px;line-height:14.3px;font-size:9.8px">manual</div><svg class="a" style="left:572.80px;top:617.75px" width="15.20" height="15.20" viewBox="-12 -12 24 24"><circle cx="0" cy="0" r="10.97" fill="#fff" stroke="#161616" stroke-width="2.05"/><path d="M-6.8 -6.5 H2.2 V8.2 H-1.7 V-2.8 H-6.8z" fill="#1a1a1a"/><rect x="3.1" y="-7.2" width="1.4" height="8" fill="#4f8ff7"/><rect x="5.3" y="-6.5" width="1.9" height="3.9" fill="#1a1a1a"/></svg><div class="a" style="left:594.80px;top:618.85px;width:50px;height:14px;border-radius:7px;background:#e5e7eb;color:#4b5563;font-size:9.8px;line-height:14px;text-align:center">@smoke</div></div><svg class="a" style="left:73px;top:399.2px" width="313.2" height="32" viewBox="0 0 313.2 32"><rect x="1.3" y="1.3" width="310.59999999999997" height="29.4" rx="0.8" fill="none" stroke="#fa2a43" stroke-width="2.6"/></svg><svg class="a" style="left:838px;top:101.4px" width="231.5" height="37.5" viewBox="0 0 231.5 37.5"><rect x="1.3" y="1.3" width="228.9" height="34.9" rx="0.8" fill="none" stroke="#fa2a43" stroke-width="2.6"/></svg><svg class="a" style="left:393.5px;top:435.3px" width="744.3" height="53.3" viewBox="0 0 744.3 53.3"><rect x="1.3" y="1.3" width="741.6999999999999" height="50.699999999999996" rx="0.8" fill="none" stroke="#fa2a43" stroke-width="2.6"/></svg></body></html>
